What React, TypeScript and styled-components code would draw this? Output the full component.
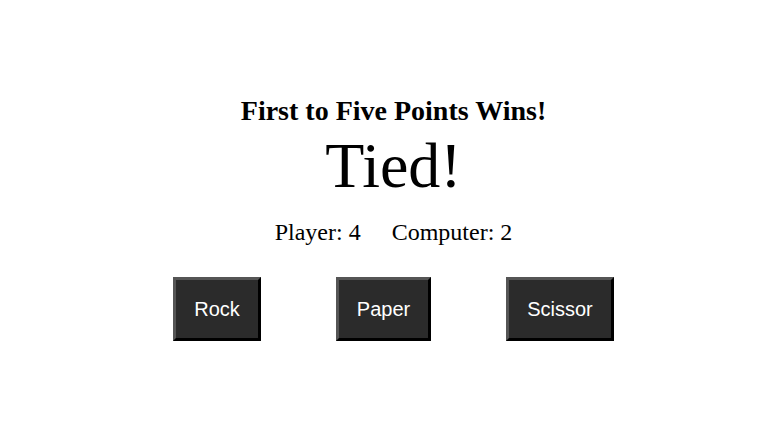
import React from "react";
import styled, { createGlobalStyle } from "styled-components";

const Global = createGlobalStyle`
  html, body { margin: 0; padding: 0; background: #ffffff; }
  body { font-family: "Liberation Serif", "Times New Roman", serif; color: #000; }
`;

const Page = styled.main`
  display: flex;
  flex-direction: column;
  align-items: center;
  padding: 95px 0 0 21px;
  box-sizing: border-box;
  width: 766px;
  height: 442px;
`;

const Title = styled.h2`
  margin: 0;
  font-size: 28px;
  line-height: 32px;
  font-weight: bold;
`;

const Result = styled.h1`
  margin: 7px 0 0;
  font-size: 64px;
  line-height: 64px;
  font-weight: normal;
`;

const Scores = styled.div`
  display: flex;
  gap: 31px;
  margin-top: 20px;
  font-size: 24px;
  line-height: 28px;
`;

const Buttons = styled.div`
  display: flex;
  gap: 75px;
  margin-top: 31px;
`;

const ChoiceButton = styled.button`
  box-sizing: border-box;
  height: 64px;
  padding: 0 18px;
  background: #2b2b2b;
  color: #ffffff;
  font-family: "Liberation Sans", Arial, sans-serif;
  font-size: 20px;
  border-style: solid;
  border-width: 3px;
  border-color: #555555 #000000 #000000 #555555;
  cursor: pointer;
`;

export default function App() {
  return (
    <>
      <Global />
      <Page>
        <Title>First to Five Points Wins!</Title>
        <Result>Tied!</Result>
        <Scores>
          <span>Player: 4</span>
          <span>Computer: 2</span>
        </Scores>
        <Buttons>
          <ChoiceButton>Rock</ChoiceButton>
          <ChoiceButton>Paper</ChoiceButton>
          <ChoiceButton>Scissor</ChoiceButton>
        </Buttons>
      </Page>
    </>
  );
}
